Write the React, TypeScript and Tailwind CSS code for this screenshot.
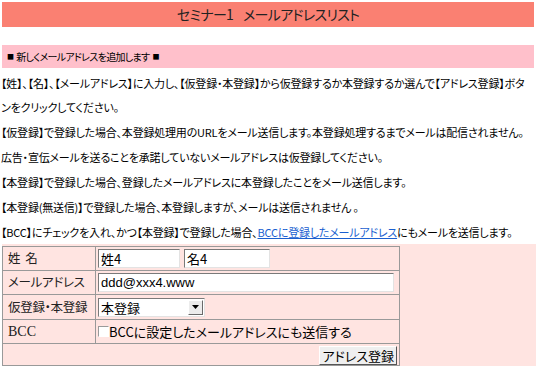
import { useState } from 'react'

const jp = "font-['Noto_Sans_CJK_JP','Noto_Sans',sans-serif] [font-feature-settings:'palt']"

export default function App() {
    const [sei, setSei] = useState('姓4')
    const [mei, setMei] = useState('名4')
    const [mail, setMail] = useState('ddd@xxx4.www')
    const [bcc, setBcc] = useState(false)

    const inputCls =
        'h-[19px] bg-white px-0.5 text-[13px] text-black outline-none border border-t-[#7a7a7a] border-l-[#7a7a7a] border-b-[#e3e3e3] border-r-[#e3e3e3]'
    const labelCls = 'border border-[#999] p-0 pl-[5px] leading-none whitespace-nowrap text-[12.5px] tracking-[-0.3px] text-[#222]'
    const cellCls = 'border border-[#999] p-0 pl-[2px]'

    return (
        <div className={`w-[536px] h-[366px] bg-white text-black overflow-hidden ${jp}`}>
            {/* title */}
            <div className="mx-[2px] mt-[2px] h-[25px] bg-[#fa8072] flex items-center justify-center gap-[10px] text-[14px] tracking-[-0.7px] text-[#222]">
                <span>セミナー1</span>
                <span>メールアドレスリスト</span>
            </div>

            {/* section heading */}
            <div className="mx-[2px] mt-[18px] h-[23px] bg-[#ffc0cb] flex items-center gap-[3px] pl-[5px] text-[10px] tracking-[-0.7px]">
                <span className="text-[7px]">■</span>
                <span>新しくメールアドレスを追加します</span>
                <span className="text-[7px]">■</span>
            </div>

            {/* notes */}
            <div className="mt-[3px] pl-[1px] text-[11px] tracking-[-0.2px] leading-[24px] whitespace-nowrap flex flex-col gap-[1px]">
                <p>
                    【姓】、【名】、【メールアドレス】に入力し、【仮登録・本登録】から仮登録するか本登録するか選んで【アドレス登録】ボタ
                    <br />
                    ンをクリックしてください。
                </p>
                <p>【仮登録】で登録した場合、本登録処理用のURLをメール送信します。本登録処理するまでメールは配信されません。</p>
                <p>広告・宣伝メールを送ることを承諾していないメールアドレスは仮登録してください。</p>
                <p>【本登録】で登録した場合、登録したメールアドレスに本登録したことをメール送信します。</p>
                <p>【本登録(無送信)】で登録した場合、本登録しますが、メールは送信されません 。</p>
                <p>
                    【BCC】にチェックを入れ、かつ【本登録】で登録した場合、
                    <a href="#" className="text-[#1a5fd0] underline">BCCに登録したメールアドレス</a>
                    にもメールを送信します。
                </p>
            </div>

            {/* form */}
            <div className="ml-[2px] pt-[2px] h-[124px] bg-[#ffe4e1]">
                <table className="w-[398px] border-collapse">
                    <tbody>
                        <tr className="h-[24px]">
                            <td className={`${labelCls} w-[93px]`}>姓&nbsp;&nbsp;名</td>
                            <td className={cellCls}>
                                <div className="flex gap-[4px]">
                                    <input className={`${inputCls} w-[82px]`} value={sei} onChange={e => setSei(e.target.value)} />
                                    <input className={`${inputCls} w-[86px]`} value={mei} onChange={e => setMei(e.target.value)} />
                                </div>
                            </td>
                        </tr>
                        <tr className="h-[24px]">
                            <td className={labelCls}>メールアドレス</td>
                            <td className={cellCls}>
                                <input className={`${inputCls} block w-[296px] font-['Liberation_Sans',sans-serif]`} value={mail} onChange={e => setMail(e.target.value)} />
                            </td>
                        </tr>
                        <tr className="h-[25px]">
                            <td className={labelCls}>仮登録・本登録</td>
                            <td className={cellCls}>
                                <div className="w-[107px] h-[19px] bg-white flex items-center border border-t-[#7a7a7a] border-l-[#7a7a7a] border-b-[#e3e3e3] border-r-[#e3e3e3]">
                                    <span className="flex-1 pl-[2px] text-[13px] leading-none">本登録</span>
                                    <span className="w-[15px] h-[15px] mr-[1px] bg-[#ececec] flex items-center justify-center border border-t-white border-l-white border-b-[#6a6a6a] border-r-[#6a6a6a]">
                                        <svg width="7" height="4" viewBox="0 0 7 4"><path d="M0 0h7L3.5 4z" fill="#000" /></svg>
                                    </span>
                                </div>
                            </td>
                        </tr>
                        <tr className="h-[24px]">
                            <td className={`${labelCls} font-['Liberation_Serif',serif] text-[14px] tracking-normal`}>BCC</td>
                            <td className={cellCls}>
                                <label className="flex items-center text-[13px] leading-none whitespace-nowrap">
                                    <input type="checkbox" checked={bcc} onChange={e => setBcc(e.target.checked)} className="hidden" />
                                    <span className="w-[11px] h-[11px] bg-white border border-t-[#9a9a9a] border-l-[#9a9a9a] border-b-white border-r-white" />
                                    <span>BCCに設定したメールアドレスにも送信する</span>
                                </label>
                            </td>
                        </tr>
                        <tr className="h-[22px]">
                            <td colSpan={2} className="border border-[#999] p-0 pr-[2px] text-right leading-none">
                                <button className="h-[19px] px-[2px] align-middle bg-[#efefef] text-[13px] leading-none border border-t-white border-l-white border-b-[#555] border-r-[#555]">
                                    アドレス登録
                                </button>
                            </td>
                        </tr>
                    </tbody>
                </table>
            </div>
        </div>
    )
}
